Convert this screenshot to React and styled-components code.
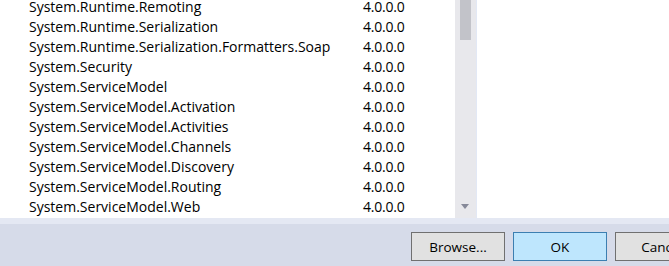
import styled, { createGlobalStyle } from 'styled-components';

const GlobalStyle = createGlobalStyle`
  html, body {
    margin: 0;
    padding: 0;
    background: #ffffff;
    overflow: hidden;
  }
  body {
    font-family: 'Open Sans', 'Noto Sans', sans-serif;
    color: #000000;
  }
`;

const assemblies = [
  'System.Runtime.Remoting',
  'System.Runtime.Serialization',
  'System.Runtime.Serialization.Formatters.Soap',
  'System.Security',
  'System.ServiceModel',
  'System.ServiceModel.Activation',
  'System.ServiceModel.Activities',
  'System.ServiceModel.Channels',
  'System.ServiceModel.Discovery',
  'System.ServiceModel.Routing',
  'System.ServiceModel.Web',
];

const App = () => {
  return (
    <>
      <GlobalStyle />
      <Window>
        <Body>
          <ListPane>
            <List>
              {assemblies.map((name) => (
                <Row key={name}>
                  <Name>{name}</Name>
                  <Version>4.0.0.0</Version>
                </Row>
              ))}
            </List>
          </ListPane>
          <ScrollBar>
            <Thumb />
            <ArrowDown />
          </ScrollBar>
          <SidePane />
        </Body>
        <Footer>
          <Button>Browse...</Button>
          <Button primary>OK</Button>
          <Button>Cancel</Button>
        </Footer>
      </Window>
    </>
  );
};

const Window = styled.div`
  width: 669px;
  height: 266px;
  display: flex;
  flex-direction: column;
  overflow: hidden;
`;

const Body = styled.div`
  height: 218px;
  display: flex;
  background: #ffffff;
`;

const ListPane = styled.div`
  width: 455px;
  overflow: hidden;
`;

const List = styled.div`
  margin-top: -3px;
`;

const Row = styled.div`
  display: flex;
  height: 20px;
  line-height: 20px;
  font-size: 14px;
  white-space: nowrap;
`;

const Name = styled.div`
  width: 334px;
  padding-left: 29px;
`;

const Version = styled.div`
  flex: 1;
  letter-spacing: -0.2px;
`;

const ScrollBar = styled.div`
  position: relative;
  width: 21px;
  background: #e8e8ec;
  border-right: 1px solid #e2e8f5;
`;

const Thumb = styled.div`
  margin-left: 5px;
  width: 11px;
  height: 40px;
  background: #c2c3c9;
`;

const ArrowDown = styled.div`
  position: absolute;
  left: 6px;
  bottom: 9px;
  width: 0;
  height: 0;
  border-left: 4px solid transparent;
  border-right: 4px solid transparent;
  border-top: 5px solid #868999;
`;

const SidePane = styled.div`
  flex: 1;
  background: #ffffff;
`;

const Footer = styled.div`
  flex: 1;
  display: flex;
  align-items: flex-start;
  gap: 8px;
  padding: 8px 0 0 411px;
  background: #d6dbe9;
  border-top: 6px solid #e4e8f3;
`;

const Button = styled.button`
  flex: none;
  width: 94px;
  height: 29px;
  padding: 0;
  font-family: 'Open Sans', 'Noto Sans', sans-serif;
  font-size: 13.5px;
  color: #000000;
  background: ${({ primary }) => (primary ? '#bee6fd' : '#e1e1e1')};
  border: 1px solid ${({ primary }) => (primary ? '#3c7fb1' : '#707070')};
  border-radius: 0;
`;

export default App;
